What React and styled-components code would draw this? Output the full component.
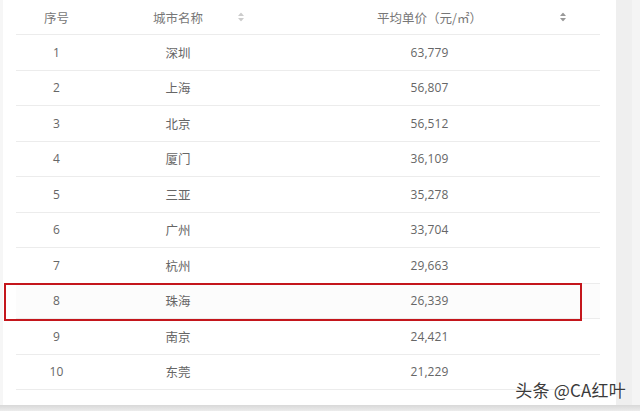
import React from "react";
import styled, { createGlobalStyle } from "styled-components";

const GlobalStyle = createGlobalStyle`
  html, body {
    margin: 0;
    padding: 0;
    background: #fff;
  }
  body {
    font-family: "Noto Sans CJK SC", "Open Sans", sans-serif;
  }
`;

const Screen = styled.div`
  width: 640px;
  height: 411px;
  overflow: hidden;
  display: flex;
  flex-direction: column;
  background: #fff;
`;

const Body = styled.div`
  flex: 1;
  display: flex;
  min-height: 0;
`;

const Panel = styled.div`
  position: relative;
  width: 616px;
  display: flex;
  border-left: 3px solid #f6f6f6;
  box-sizing: border-box;
`;

const Side = styled.div`
  flex: 1;
  background: linear-gradient(to right, #efefef 0, #efefef 16px, #f4f4f4 16px);
`;

const Bottom = styled.div`
  height: 6px;
  background: linear-gradient(to bottom, #d8d8d8, #ececec);
`;

const Table = styled.div`
  margin-left: 13px;
  width: 584px;
  display: flex;
  flex-direction: column;
`;

const Row = styled.div`
  position: relative;
  display: grid;
  grid-template-columns: 81px 162px 1fr;
  align-items: center;
  height: ${p => (p.$head ? "35px" : "35.5px")};
  border-bottom: 1px solid #ececec;
  box-sizing: border-box;
  background: ${p => (p.$hover ? "#fcfcfc" : "transparent")};
  color: ${p => (p.$head ? "#777" : "#666")};
  font-size: 12.5px;
`;

const Cell = styled.div`
  position: relative;
  text-align: center;
  height: 100%;
  display: flex;
  align-items: center;
  justify-content: center;
`;

const Num = styled.span`
  font-family: "Open Sans", "Noto Sans CJK SC", sans-serif;
  font-size: 12px;
  letter-spacing: 0.1px;
`;

const Sort = styled.span`
  position: absolute;
  right: ${p => p.$right}px;
  top: 50%;
  transform: translateY(-50%);
  display: flex;
  flex-direction: column;
  color: ${p => p.$color};
`;

const Mark = styled.div`
  position: absolute;
  left: 1px;
  top: 283px;
  width: 578px;
  height: 38px;
  border: 2px solid #c4161c;
  box-sizing: border-box;
  pointer-events: none;
`;

const Watermark = styled.div`
  position: absolute;
  right: -10px;
  top: 377px;
  font-size: 17px;
  color: #3a3a3a;
  letter-spacing: 0.2px;
  text-shadow: 0 0 2px #fff, 0 0 2px #fff;
  white-space: nowrap;
`;

const SortIcon = ({ right, color }) => (
  <Sort $right={right} $color={color}>
    <svg width="6" height="9" viewBox="0 0 6 9">
      <path d="M3 0 L6 3.5 H0 Z" fill="currentColor" />
      <path d="M3 9 L6 5.5 H0 Z" fill="currentColor" />
    </svg>
  </Sort>
);

const rows = [
  ["1", "深圳", "63,779"],
  ["2", "上海", "56,807"],
  ["3", "北京", "56,512"],
  ["4", "厦门", "36,109"],
  ["5", "三亚", "35,278"],
  ["6", "广州", "33,704"],
  ["7", "杭州", "29,663"],
  ["8", "珠海", "26,339"],
  ["9", "南京", "24,421"],
  ["10", "东莞", "21,229"],
];

const App = () => (
  <Screen>
    <GlobalStyle />
    <Body>
      <Panel>
        <Table>
          <Row $head>
            <Cell>序号</Cell>
            <Cell>
              城市名称
              <SortIcon right={15} color="#ccc" />
            </Cell>
            <Cell>
              平均单价（元/㎡）
              <SortIcon right={34} color="#999" />
            </Cell>
          </Row>
          {rows.map(([n, city, price]) => (
            <Row key={n} $hover={n === "8"}>
              <Cell>
                <Num>{n}</Num>
              </Cell>
              <Cell>{city}</Cell>
              <Cell>
                <Num>{price}</Num>
              </Cell>
            </Row>
          ))}
        </Table>
        <Mark />
        <Watermark>头条 @CA红叶</Watermark>
      </Panel>
      <Side />
    </Body>
    <Bottom />
  </Screen>
);

export default App;
